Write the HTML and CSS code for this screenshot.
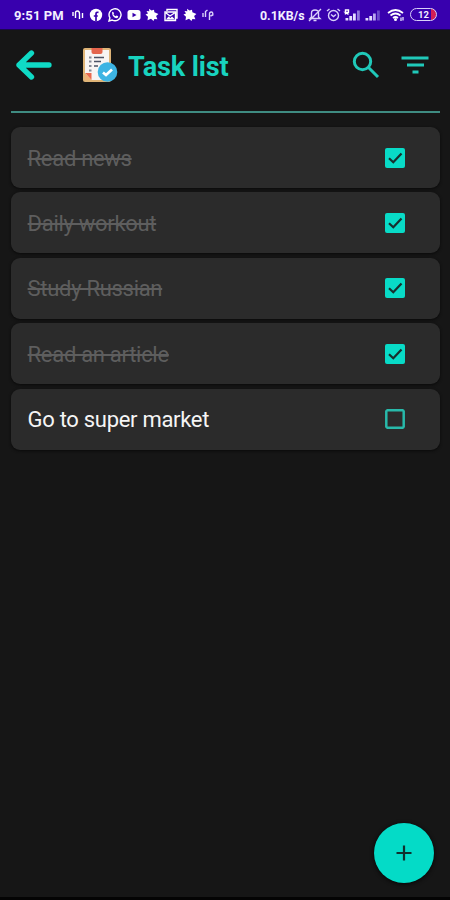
FILE: index.html
```html
<!DOCTYPE html>
<html lang="en">
<head>
<meta charset="utf-8">
<title>Task list</title>
<link rel="stylesheet" href="styles.css">
</head>
<body>
<div class="status">
  <span class="time">9:51 PM</span>
  <div class="notifications">
    <svg viewBox="0 0 14 14"><path class="line" d="M2 4v4M4.500 10V5q0-2 2-2t2 3v5M11.500 5v5"/></svg>
    <svg viewBox="0 0 14 14"><circle cx="7" cy="7" r="6.200" fill="#fff"/><path d="M7 13V6q0-2 2.500-1.700M4.800 8h4" fill="none" stroke="#3800ae" stroke-width="1.700"/></svg>
    <svg viewBox="0 0 14 14"><path class="line" d="M1 13l.9-3.200A6 6 0 1 1 4.200 12z"/><path d="M4 4.500q.8-1.500 1.600 0l.4 1-.6.8q.8 1.400 2.300 2l.9-.8 1.600.8q.2 1.900-2 1.900Q4.300 9 4 4.500z" fill="#fff"/></svg>
    <svg viewBox="0 0 14 14"><rect x=".5" y="2" width="13" height="10" rx="2.500" fill="#fff"/><path d="M5.500 4.700v4.600L9.500 7z" fill="#3800ae"/></svg>
    <svg viewBox="0 0 14 14"><path id="burst" d="M4 .8l2.500 1.700L9 1.700l.4 2.600 4 1.700-2.300 2 1.300 3.200-3-.3L8.500 13 6 10.700 2.500 12.200l.5-3.400L.5 6.500l2.500-1L1.500 3l2.800.2z" fill="#fff"/></svg>
    <svg viewBox="0 0 14 14"><path class="line" d="M3 3V1.500h10V10h-1.500M1 4h10.500v8.500H1zM2 5l4 3 4.500-3"/><path d="M2 11.500l2.500-3 2 1.500 1.500-1.500 3 3z" fill="#fff"/></svg>
    <svg viewBox="0 0 14 14"><use href="#burst"/></svg>
    <svg viewBox="0 0 14 14"><path class="line soft" d="M2 5v4M4.500 9V3.500L6.500 2M8.500 12V6q0-2 1.800-2t1.500 3L9.500 8"/></svg>
  </div>
  <span class="speed">0.1KB/s</span>
  <div class="system">
    <svg class="w18" viewBox="0 0 18 14"><path class="line soft" d="M4 10.500h10L12.500 9V5q0-3-3.500-3T5.500 5v4zM7.500 12.500h3M3 13L15 1"/></svg>
    <svg class="w19" viewBox="0 0 19 14"><circle class="line soft" cx="9.500" cy="7.500" r="5"/><path class="line soft" d="M7 6.500l2.500 2L12 6.500M3 3l2.500-2M16 3l-2.500-2"/></svg>
    <svg class="w20" viewBox="0 0 20 14"><path d="M2.500 12.500V10h2.800v2.500zM6.300 12.500V8h2.800v4.500zM10 12.500V5.500h2.800v7z" fill="#e4dcff"/><path d="M14 12.500V2.500h2.800v10z" fill="#8f74dc"/><path class="line" d="M2.500 6.500V2h3v2.500h-3l3 2"/></svg>
    <svg class="w20" viewBox="0 0 20 14"><path d="M2.500 12.500V10h2.800v2.500zM6.300 12.500V8h2.800v4.500z" fill="#e4dcff"/><path d="M10 12.500V5.500h2.800v7z" fill="#b9a6ee"/><path d="M14 12.500V2.500h2.800v10z" fill="#6c49cb"/></svg>
    <svg class="w25" viewBox="0 0 25 14"><path class="line wifi" d="M5 5q7.500-6 15 0M7.500 7.500q5-4 10 0M10 10q2.500-2 5 0"/><circle cx="12.500" cy="11.500" r="1.500" fill="#fff"/><path class="line soft" d="M18 13V9.500M20 9v3.500"/></svg>
    <span class="battery">12</span>
  </div>
</div>

<header class="header">
  <svg class="back" viewBox="0 0 36 30"><path d="M33 15H3M15.500 3L3 15l12.500 12"/></svg>
  <svg class="clipboard" viewBox="0 0 36 36">
    <rect x="1" y="1" width="28" height="34" rx="2" fill="#dfb477"/>
    <path d="M3 3h24v30H9l-6-6z" fill="#f8f4f3"/>
    <path d="M3 26h6.500v7z" fill="#e9694f"/><path d="M3 26v7h6.500z" fill="#efb076"/>
    <path d="M9.500 1h11v4q0 2-2 2h-7q-2 0-2-2z" fill="#e5654d"/>
    <path d="M12 10.500h10M12 14.500h7M12 19h4" stroke="#4c5265" stroke-width="1.500"/>
    <path d="M7 10.500h2.500M7 14.500h2.500M7 19h2.500M7 23.500h2.500" stroke="#858895" stroke-width="2"/>
    <circle cx="25.500" cy="25" r="9.800" fill="#3db4e3"/>
    <path d="M21 25.500l3 2.500 6-5.500" fill="none" stroke="#fff" stroke-width="2.700"/>
  </svg>
  <h1>Task list</h1>
  <svg class="search" viewBox="0 0 28 28"><circle cx="10.500" cy="10.500" r="8.200"/><path d="M16.500 16.500l9.500 9.500"/></svg>
  <svg class="filter" viewBox="0 0 28 20"><path d="M.5 3h27M6 10h17M11.500 17h6"/></svg>
</header>

<main class="tasks">
  <div class="task done"><span>Read news</span><svg class="check" viewBox="0 0 20 20"><path d="M4 10.200l4.300 4.100L16.500 5.500"/></svg></div>
  <div class="task done"><span>Daily workout</span><svg class="check" viewBox="0 0 20 20"><path d="M4 10.200l4.300 4.100L16.500 5.500"/></svg></div>
  <div class="task done"><span>Study Russian</span><svg class="check" viewBox="0 0 20 20"><path d="M4 10.200l4.300 4.100L16.500 5.500"/></svg></div>
  <div class="task done"><span>Read an article</span><svg class="check" viewBox="0 0 20 20"><path d="M4 10.200l4.300 4.100L16.500 5.500"/></svg></div>
  <div class="task"><span>Go to super market</span><svg class="box" viewBox="0 0 20 20"><rect x="1.300" y="1.300" width="17.400" height="17.400" rx="1"/></svg></div>
</main>

<button class="add" aria-label="Add task"><svg viewBox="0 0 16 16"><path d="M8 .5v15M.5 8h15"/></svg></button>
<div class="navline"></div>
</body>
</html>
```
FILE: styles.css
```css
* { box-sizing: border-box; }
body {
  margin: 0;
  height: 900px;
  overflow: hidden;
  display: flex;
  flex-direction: column;
  background: #161616;
  font-family: Roboto, sans-serif;
}
svg { display: block; flex: none; }
.status {
  height: 30px;
  flex: none;
  display: flex;
  align-items: center;
  padding-left: 14px;
  background: #3800ae;
  border-bottom: 1px solid #1c0750;
  color: #f3efff;
  font-size: 13px;
  font-weight: 700;
  white-space: nowrap;
}
.time { width: 54px; padding-top: 1px; letter-spacing: 0.1px; }
.notifications { display: flex; gap: 4.700px; width: 192px; padding-left: 2.500px; }
.notifications svg { width: 14px; height: 14px; }
.line { fill: none; stroke: #fff; stroke-width: 1.400; }
.soft { stroke: #d9d0fa; }
.wifi { stroke-width: 1.700; }
.speed { width: 46px; padding-top: 1px; font-size: 12.4px; }
.system { display: flex; align-items: center; }
.system svg { height: 14px; }
.w18 { width: 18px; }
.w19 { width: 19px; }
.w20 { width: 20px; }
.w25 { width: 25px; }
.battery {
  width: 27px;
  height: 13px;
  margin-left: 2px;
  border: 1px solid #d9d0fa;
  border-radius: 7px;
  background: linear-gradient(90deg, transparent 80%, #d51e55 80%);
  font-size: 9.500px;
  line-height: 11px;
  text-align: center;
}
.header {
  height: 83px;
  flex: none;
  display: flex;
  align-items: center;
  margin: 0 10px 0 11px;
  padding: 0 11.500px 11px 5px;
  border-bottom: 2px solid #3f8c82;
}
.back { width: 36px; height: 30px; fill: none; stroke: #0fdac5; stroke-width: 5.300; stroke-linecap: round; stroke-linejoin: round; }
.clipboard { width: 36px; height: 36px; margin-left: 30px; }
h1 { flex: 1; margin: 3px 0 0 10px; color: #18d3bf; font-size: 27px; line-height: 32px; font-weight: 700; letter-spacing: -0.1px; white-space: nowrap; }
.search { width: 28px; height: 28px; fill: none; stroke: #20c9b9; stroke-width: 3; }
.filter { width: 28px; height: 20px; margin-left: 21px; stroke: #20c9b9; stroke-width: 3; }
.tasks { display: flex; flex-direction: column; gap: 4.400px; margin: 14px 10px 0 11px; }
.task {
  height: 61px;
  display: flex;
  align-items: center;
  justify-content: space-between;
  padding: 0 34.600px 0 16.600px;
  border-radius: 9px;
  background: #2b2b2b;
  box-shadow: 0 1px 3px #0a0a0a;
  color: #f5f5f5;
  font-size: 22px;
  letter-spacing: -0.300px;
}
.task span { padding-top: 1px; white-space: nowrap; }
.done { color: #5e5e5e; }
.done span { text-decoration: line-through; text-decoration-thickness: 1.500px; }
.check, .box { width: 20px; height: 20px; border-radius: 2px; }
.check { background: #08dbc7; fill: none; stroke: #17302e; stroke-width: 2.200; }
.box { fill: none; stroke: #28b9aa; stroke-width: 2.500; }
.add {
  display: flex;
  align-items: center;
  justify-content: center;
  width: 60px;
  height: 60px;
  margin: auto 16.500px 14px auto;
  padding: 0;
  border: 0;
  border-radius: 50%;
  background: #04dbc7;
  box-shadow: 0 1px 4px #050505;
}
.add svg { width: 16px; height: 16px; stroke: #10312e; stroke-width: 2.200; }
.navline { height: 3px; flex: none; background: #040404; }
```
